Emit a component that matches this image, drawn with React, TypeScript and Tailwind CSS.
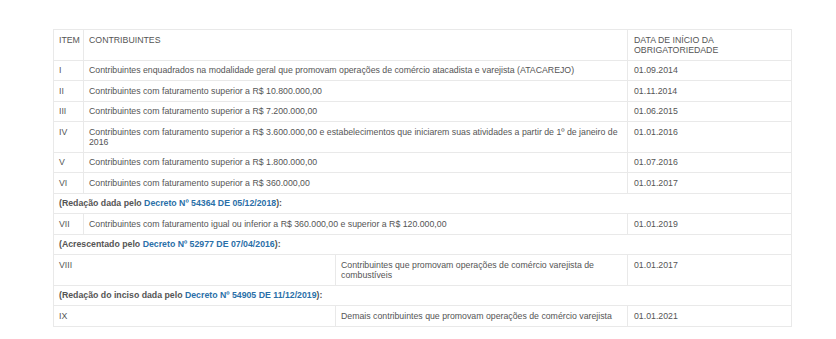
const rows: { item: string; text: string; date: string }[] = [
  { item: "I", text: "Contribuintes enquadrados na modalidade geral que promovam operações de comércio atacadista e varejista (ATACAREJO)", date: "01.09.2014" },
  { item: "II", text: "Contribuintes com faturamento superior a R$ 10.800.000,00", date: "01.11.2014" },
  { item: "III", text: "Contribuintes com faturamento superior a R$ 7.200.000,00", date: "01.06.2015" },
  { item: "IV", text: "Contribuintes com faturamento superior a R$ 3.600.000,00 e estabelecimentos que iniciarem suas atividades a partir de 1º de janeiro de 2016", date: "01.01.2016" },
  { item: "V", text: "Contribuintes com faturamento superior a R$ 1.800.000,00", date: "01.07.2016" },
  { item: "VI", text: "Contribuintes com faturamento superior a R$ 360.000,00", date: "01.01.2017" },
];

const td = "border border-[#e9e9e9] px-[5px] py-[4.75px] align-top";

function Note({ pre, link }: { pre: string; link: string }) {
  return (
    <tr>
      <td colSpan={4} className={`${td} font-bold`}>
        {pre}
        <a href="#" className="text-[#2a6fa8]">{link}</a>):
      </td>
    </tr>
  );
}

export default function App() {
  return (
    <div className="min-h-screen bg-white pt-[29px] pl-[53px] font-['Liberation_Sans',Arial,sans-serif] text-[8.75px] leading-[10px] text-[#555]">
      <table className="w-[738px] table-fixed border-collapse">
        <colgroup>
          <col className="w-[30px]" />
          <col className="w-[252px]" />
          <col className="w-[292px]" />
          <col className="w-[164px]" />
        </colgroup>
        <tbody>
          <tr>
            <td className={td}>ITEM</td>
            <td colSpan={2} className={td}>CONTRIBUINTES</td>
            <td className={`${td} pl-[6px]`}>DATA DE INÍCIO DA<br />OBRIGATORIEDADE</td>
          </tr>
          {rows.map((r) => (
            <tr key={r.item}>
              <td className={td}>{r.item}</td>
              <td colSpan={2} className={td}>{r.text}</td>
              <td className={`${td} pl-[6px]`}>{r.date}</td>
            </tr>
          ))}
          <Note pre="(Redação dada pelo " link="Decreto Nº 54364 DE 05/12/2018" />
          <tr>
            <td className={td}>VII</td>
            <td colSpan={2} className={td}>Contribuintes com faturamento igual ou inferior a R$ 360.000,00 e superior a R$ 120.000,00</td>
            <td className={`${td} pl-[6px]`}>01.01.2019</td>
          </tr>
          <Note pre="(Acrescentado pelo " link="Decreto Nº 52977 DE 07/04/2016" />
          <tr>
            <td colSpan={2} className={td}>VIII</td>
            <td className={td}>Contribuintes que promovam operações de comércio varejista de combustíveis</td>
            <td className={`${td} pl-[6px]`}>01.01.2017</td>
          </tr>
          <Note pre="(Redação do inciso dada pelo " link="Decreto Nº 54905 DE 11/12/2019" />
          <tr>
            <td colSpan={2} className={td}>IX</td>
            <td className={td}>Demais contribuintes que promovam operações de comércio varejista</td>
            <td className={`${td} pl-[6px]`}>01.01.2021</td>
          </tr>
        </tbody>
      </table>
    </div>
  );
}
